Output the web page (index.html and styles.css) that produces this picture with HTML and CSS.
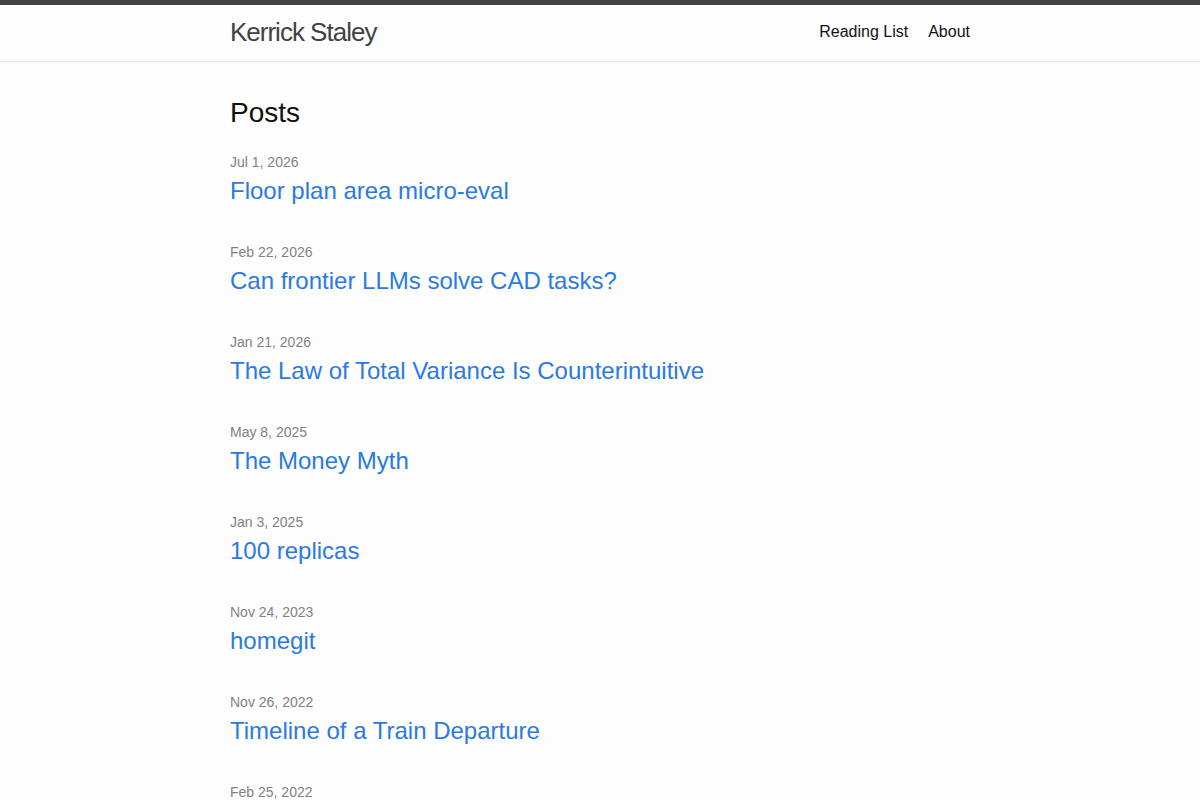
FILE: index.html
```html
<!DOCTYPE html>
<html lang="en">
<head>
  <meta charset="UTF-8" />
  <title>Kerrick Staley</title>
  <link rel="stylesheet" href="styles.css">
</head>
<body>

  <header class="site-header">
    <div class="wrapper header-row">
      <a class="site-title" href="#">Kerrick Staley</a>
      <nav class="site-nav">
        <a class="page-link" href="#">Reading List</a>
        <a class="page-link" href="#">About</a>
      </nav>
    </div>
  </header>

  <main class="page-content">
    <div class="wrapper">
      <h2 class="post-list-heading">Posts</h2>
      <ul class="post-list">
        <li>
          <span class="post-meta">Jul 1, 2026</span>
          <h3><a class="post-link" href="#">Floor plan area micro-eval</a></h3>
        </li>
        <li>
          <span class="post-meta">Feb 22, 2026</span>
          <h3><a class="post-link" href="#">Can frontier LLMs solve CAD tasks?</a></h3>
        </li>
        <li>
          <span class="post-meta">Jan 21, 2026</span>
          <h3><a class="post-link" href="#">The Law of Total Variance Is Counterintuitive</a></h3>
        </li>
        <li>
          <span class="post-meta">May 8, 2025</span>
          <h3><a class="post-link" href="#">The Money Myth</a></h3>
        </li>
        <li>
          <span class="post-meta">Jan 3, 2025</span>
          <h3><a class="post-link" href="#">100 replicas</a></h3>
        </li>
        <li>
          <span class="post-meta">Nov 24, 2023</span>
          <h3><a class="post-link" href="#">homegit</a></h3>
        </li>
        <li>
          <span class="post-meta">Nov 26, 2022</span>
          <h3><a class="post-link" href="#">Timeline of a Train Departure</a></h3>
        </li>
        <li>
          <span class="post-meta">Feb 25, 2022</span>
          <h3><a class="post-link" href="#">Older post</a></h3>
        </li>
      </ul>
    </div>
  </main>

</body>
</html>
```

FILE: styles.css
```css
/* Base */
body {
  margin: 0;
  background-color: #fdfdfd;
  color: #111;
  font-family: "Liberation Sans", Helvetica, Arial, sans-serif;
  font-size: 16px;
  line-height: 1.5;
}

a {
  text-decoration: none;
}

.wrapper {
  max-width: 740px;
  margin: 0 auto;
  padding: 0 30px;
}

/* Header */
.site-header {
  border-top: 5px solid #424242;
  border-bottom: 1px solid #e8e8e8;
  min-height: 56px;
}

.header-row {
  display: flex;
  justify-content: space-between;
  align-items: center;
}

.site-title {
  font-size: 26px;
  font-weight: 300;
  line-height: 54px;
  letter-spacing: -1px;
  color: #424242;
}

.site-nav {
  display: flex;
  gap: 20px;
  line-height: 54px;
}

.page-link {
  color: #111;
}

/* Posts */
.page-content {
  padding: 30px 0;
}

.post-list-heading {
  font-size: 28px;
  font-weight: 400;
  margin: 0 0 18px;
}

.post-list {
  list-style: none;
  margin: 0;
  padding: 0;
}

.post-list li {
  margin-bottom: 33px;
}

.post-meta {
  display: block;
  font-size: 14px;
  color: #828282;
}

.post-list h3 {
  margin: 0;
  font-size: 24px;
  font-weight: 400;
}

.post-link {
  display: block;
  color: #2a7ae2;
}
```
